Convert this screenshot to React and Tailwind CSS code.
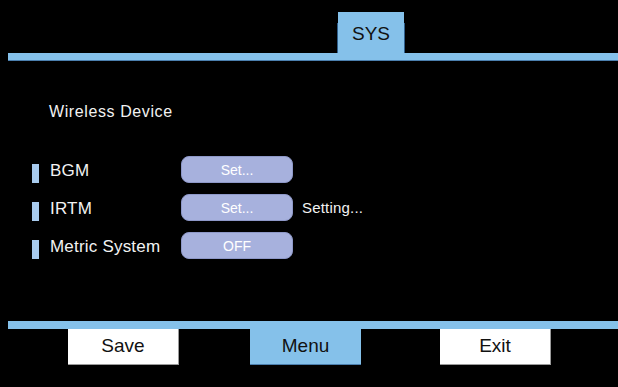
export default function App() {
  const rows = [
    { label: "BGM", btn: "Set...", note: "" },
    { label: "IRTM", btn: "Set...", note: "Setting..." },
    { label: "Metric System", btn: "OFF", note: "" },
  ];
  return (
    <div
      className="w-[618px] h-[387px] bg-black overflow-hidden flex flex-col text-[#f2f2f2]"
      style={{ fontFamily: '"Liberation Sans", Arial, sans-serif' }}
    >
      {/* Tab row */}
      <div className="h-[53px] flex items-end pl-[337px]">
        <div className="flex items-end h-[41px]">
          <div className="w-px h-[30px] bg-[#2f5f8c]" />
          <div className="w-[66px] h-[41px] bg-[#85c1ea] flex items-center justify-center text-[19px] leading-none text-[#111] pt-[1px]">
            SYS
          </div>
          <div className="w-px h-[30px] bg-[#2f5f8c]" />
        </div>
      </div>
      <div className="ml-[8px] h-[8px] bg-[#85c1ea] border-b border-[#4b7fae]" />

      {/* Title */}
      <div className="mt-[41px] ml-[49px] text-[16px] leading-[20px] tracking-[0.6px]">Wireless Device</div>

      {/* Rows */}
      <div className="mt-[34px] flex flex-col gap-[11px]">
        {rows.map((r) => (
          <div key={r.label} className="flex items-center h-[27px]">
            <div className="ml-[32px] w-[7px] h-[19px] bg-[#a8cbee] self-end" />
            <div className="ml-[11px] w-[131px] text-[17px] leading-[20px] pt-[3px] tracking-[0.2px]">{r.label}</div>
            <div className="w-[112px] h-[27px] rounded-[8px] bg-[#a7b1dd] border border-[#8e98c8] flex items-center justify-center text-[14px] text-white pt-[1px]">
              {r.btn}
            </div>
            {r.note && <div className="ml-[9px] text-[15px] pt-[2px] tracking-[0.2px]">{r.note}</div>}
          </div>
        ))}
      </div>

      {/* Bottom bar */}
      <div className="mt-auto mb-[22px]">
        <div className="ml-[8px] h-[8px] bg-[#85c1ea]" />
        <div className="flex h-[36px]">
          <div className="ml-[68px] w-[111px] bg-white border-r border-b border-[#9a9a9a] flex items-center justify-center text-[19px] text-[#111]">
            Save
          </div>
          <div className="ml-[71px] w-[111px] bg-[#85c1ea] border-b border-[#4b7fae] flex items-center justify-center text-[19px] text-[#111]">
            Menu
          </div>
          <div className="ml-[79px] w-[111px] bg-white border-r border-b border-[#9a9a9a] flex items-center justify-center text-[19px] text-[#111]">
            Exit
          </div>
        </div>
      </div>
    </div>
  );
}
